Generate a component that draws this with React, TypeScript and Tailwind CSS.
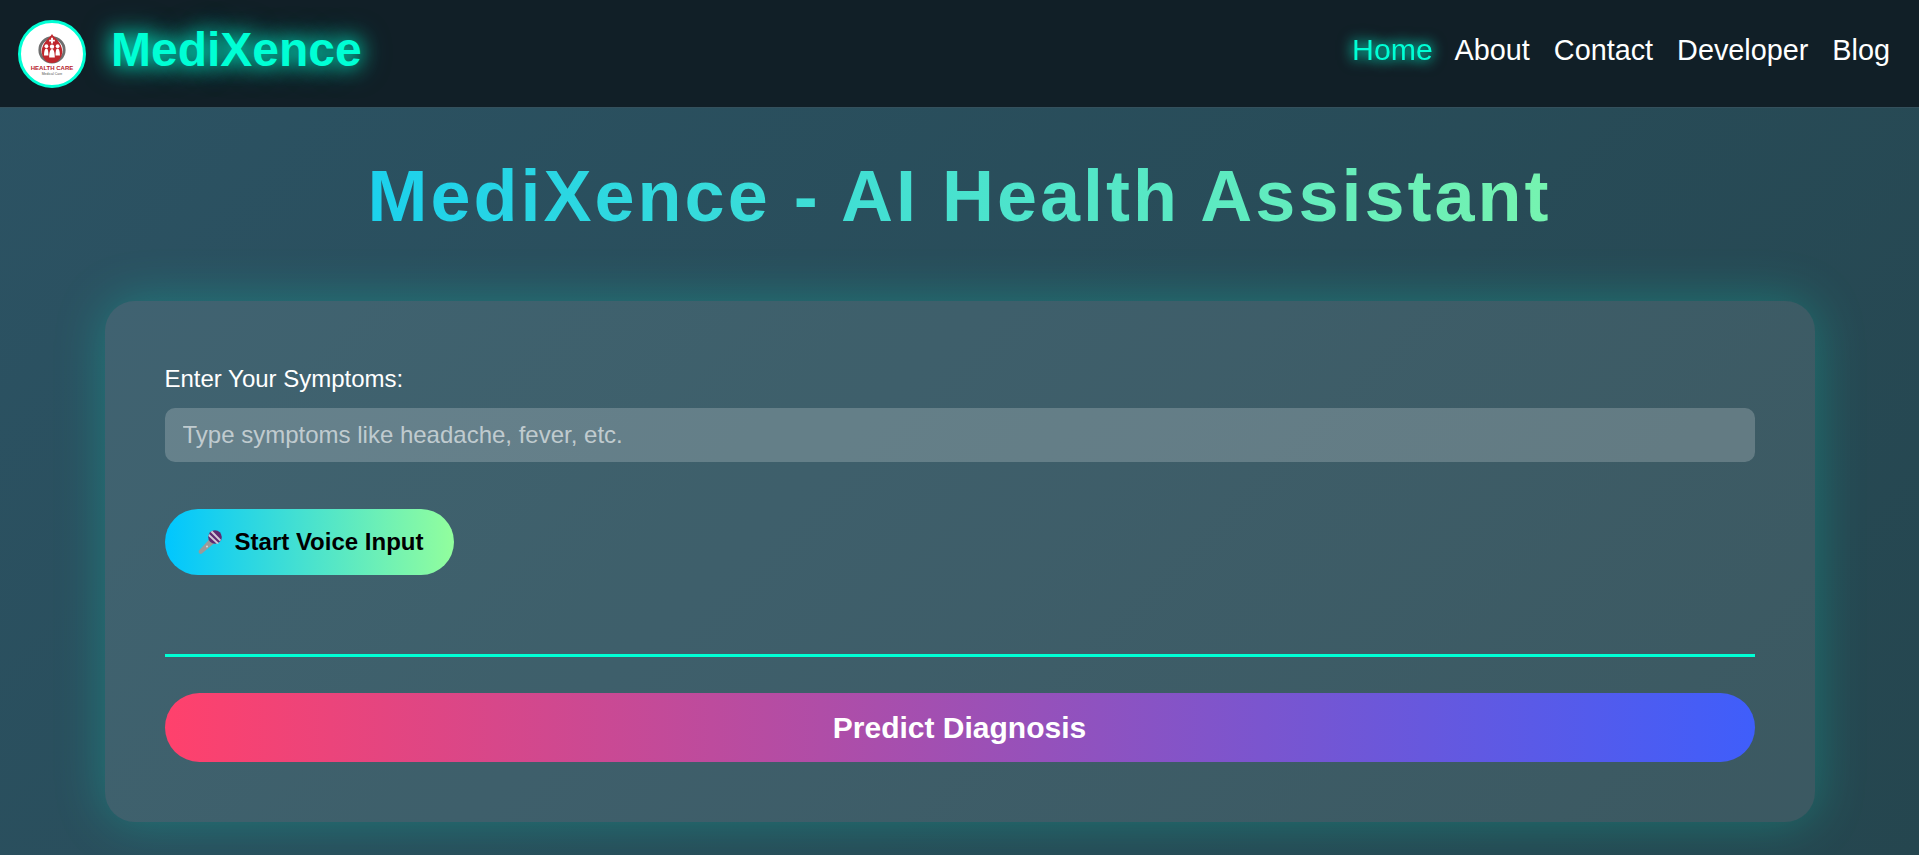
export default function App() {
  return (
    <div className="min-h-[855px] bg-[linear-gradient(135deg,#2c5364,#25464f)] font-['Liberation_Sans',Arial,sans-serif] text-white">
      <Header />
      <main className="flex flex-col items-center">
        <h1 className="mt-[48px] w-full bg-[linear-gradient(to_right,#00c6ff,#92fe9d)] bg-clip-text text-center text-[72px] leading-[80px] font-bold tracking-[3px] text-transparent">
          MediXence - AI Health Assistant
        </h1>
        <section className="mt-[65px] w-[1710px] rounded-[30px] bg-white/10 px-[60px] pt-[64px] pb-[60px] shadow-[0_0_50px_rgba(0,255,213,0.25)]">
          <label className="block text-[24px] leading-[28px]">Enter Your Symptoms:</label>
          <input
            className="mt-[15px] block h-[54px] w-full rounded-[10px] bg-white/20 px-[18px] text-[24px] text-white outline-none placeholder:text-white/60"
            placeholder="Type symptoms like headache, fever, etc."
          />
          <button className="mt-[47px] flex h-[66px] w-[289px] items-center justify-center gap-[12px] rounded-full bg-[linear-gradient(to_right,#00c6ff,#92fe9d)] pl-[2px] text-[24px] font-bold text-black">
            <MicIcon />
            Start Voice Input
          </button>
          <div className="mt-[79px] h-[3px] w-full bg-[#00ffd5]" />
          <button className="mt-[36px] block h-[69px] w-full rounded-full bg-[linear-gradient(to_right,#ff416c,#3f5efb)] text-[30px] font-bold text-white">
            Predict Diagnosis
          </button>
        </section>
      </main>
    </div>
  );
}

function Header() {
  return (
    <header className="flex h-[108px] items-center justify-between border-b border-[#34505c] bg-[#111f27] pr-[29px] pl-[18px]">
      <div className="flex items-center gap-[25px]">
        <Logo />
        <span className="mb-[7px] text-[48px] font-bold text-[#00ffd5] [text-shadow:0_0_20px_#00ffd5,0_0_30px_#00ffd580]">MediXence</span>
      </div>
      <nav className="mb-[5px] flex items-center gap-[24px] text-[28.8px]">
        <a className="inline-block scale-105 text-[#00ffd5] [text-shadow:0_0_12px_#00ffd5,0_0_15px_#00ffd580]">Home</a>
        <a>About</a>
        <a>Contact</a>
        <a>Developer</a>
        <a>Blog</a>
      </nav>
    </header>
  );
}

function Logo() {
  return (
    <div className="flex h-[68px] w-[68px] flex-col items-center justify-center rounded-full border-[3px] border-[#00ffd5] bg-white pt-[3px]">
      <svg viewBox="0 0 32 32" className="h-[30px] w-[30px]">
        <circle cx="16" cy="17" r="13" fill="none" stroke="#6f6f6f" strokeWidth="3" />
        <path d="M16 0 C18 4 27 9 27 19 A11 12 0 0 1 5 19 C5 9 14 4 16 0Z" fill="#c0272d" />
        <path d="M15 4h2v2h2v2h-2v2h-2V8h-2V6h2z" fill="#fff" />
        <circle cx="10" cy="13" r="2" fill="#fff" />
        <circle cx="22" cy="13" r="2" fill="#fff" />
        <circle cx="16" cy="13.500" r="2.300" fill="#fff" />
        <path d="M7.500 23c0-4 .8-7.500 2.500-7.500s2.200 3 2.200 7.500zM19.800 23c0-4.500.5-7.500 2.200-7.500s2.500 3.500 2.500 7.500zM13 25c0-5 1-9 3-9s3 4 3 9z" fill="#fff" />
      </svg>
      <span className="text-[6px] leading-[8px] font-bold whitespace-nowrap text-[#b5202b]">HEALTH CARE</span>
      <span className="text-[3.500px] leading-[4px] whitespace-nowrap text-[#555]">Medical Care</span>
    </div>
  );
}

function MicIcon() {
  return (
    <svg viewBox="0 0 26 26" className="h-[26px] w-[26px]">
      <path d="M13.500 9 L18 13.500 L5 24.500 Q3.500 25.500 2.200 24.200 Q1 23 2 21.500Z" fill="#9a9a9a" />
      <circle cx="10" cy="17.500" r="1" fill="#d8d8d8" />
      <circle cx="18" cy="8" r="6.800" fill="#5f2a73" />
      <path d="M13.500 3 L15.300 1.800 L24 10.700 L23 12.600Z M12.200 5 L22 14.200 L20 15 L11.400 7Z" fill="#d3c8d6" />
    </svg>
  );
}
